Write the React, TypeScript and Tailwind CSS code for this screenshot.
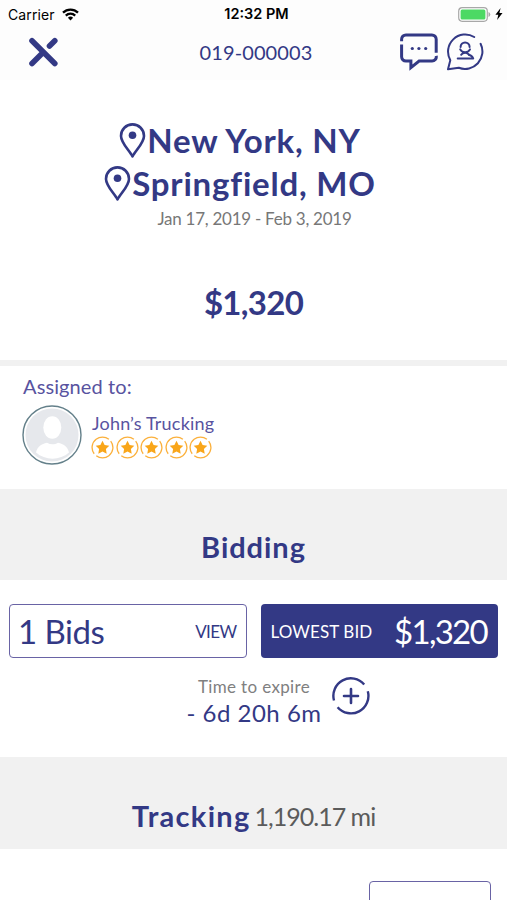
interface RouteStopProps {
  city: string;
  spacing: string;
}

function StatusBar() {
  return (
    <div className="grid h-7 grid-cols-3 items-center pl-2 pr-1 font-['Inter',sans-serif] text-[14px] text-black">
      <div className="flex items-center gap-[7px]">
        <span className="tracking-[0.1px]">Carrier</span>
        <svg width="17" height="13" viewBox="0 0 17 13" fill="none" stroke="currentColor" strokeWidth="2.3">
          <path d="M1 4.6a10.8 10.8 0 0 1 15 0" />
          <path d="M3.8 7.6a6.8 6.8 0 0 1 9.4 0" />
          <path d="M5.9 9.8a3.8 3.8 0 0 1 5.2 0L8.5 12.5z" fill="currentColor" stroke="none" />
        </svg>
      </div>
      <span className="pl-[2px] text-center text-[14.5px] font-semibold whitespace-nowrap">12:32 PM</span>
      <div className="flex items-center justify-end gap-[4px]">
        <svg width="33" height="15" viewBox="0 0 33 15">
          <rect x="0.7" y="0.7" width="28.6" height="13.6" rx="3.5" fill="#fff" stroke="#a8a8a8" strokeWidth="1.2" />
          <rect x="2.6" y="2.6" width="24.8" height="9.8" rx="1.5" fill="#4cd964" />
          <path d="M30.5 5v5q1.8-.8 1.8-2.5T30.5 5z" fill="#a8a8a8" />
        </svg>
        <svg width="8" height="12" viewBox="0 0 8 12">
          <path d="M5.6 0 .4 6.8h2.9L2.1 12l5.4-7H4.4z" fill="#000" />
        </svg>
      </div>
    </div>
  );
}

function CloseIcon() {
  return (
    <svg width="30" height="30" viewBox="0 0 30 30" fill="none" stroke="#333985" strokeWidth="5.6" strokeLinecap="round">
      <path d="M4 3.8 26.800 26.600M4 26.600 14 16.600M21.500 9.100 26.800 3.800" />
    </svg>
  );
}

function ChatIcon() {
  return (
    <svg width="38" height="38" viewBox="0 0 38 38" fill="none" stroke="#333985" strokeWidth="3">
      <path d="M1.6 8.2V6.2a4.3 4.3 0 0 1 4.3-4.3h26a4.3 4.3 0 0 1 4.3 4.3v13.6" />
      <path d="M1.6 11.4v12.4a4.3 4.3 0 0 0 4.3 4.3h5v6.5l8.2-6.5h12.8a4.3 4.3 0 0 0 4.3-5.2" />
      <g fill="#333985" stroke="none">
        <circle cx="12.3" cy="15.5" r="1.6" />
        <circle cx="18.9" cy="15.5" r="1.6" />
        <circle cx="25.7" cy="15.5" r="1.6" />
      </g>
    </svg>
  );
}

function ContactIcon() {
  return (
    <svg width="38" height="38" viewBox="0 0 38 38" fill="none" stroke="#333985" strokeWidth="2" strokeLinejoin="round" strokeLinecap="round">
      <path d="M28.2 4A17.2 17.2 0 0 0 4.3 27.2L2 36.3l10.8-1.5A17.4 17.4 0 0 0 34.6 10.8" />
      <path d="M14.6 13.900a4.500 4.500 0 0 1 9 0" />
      <path d="M14.2 16.400c2 3.800 7.800 3.800 9.800 0M15.200 21.800c1.400-2.800 6.400-2.800 7.800 0" />
      <path d="M27.200 25.500H11.700M27.200 25.500c-.7-2.200-2-3-4.200-3.700" />
    </svg>
  );
}

function RouteStop({ city, spacing }: RouteStopProps) {
  return (
    <div className="flex h-[43px] items-center">
      <svg className="mr-[1px] shrink-0" width="27" height="36" viewBox="0 0 27 36" fill="none">
        <path d="M13.5 33.500C10.500 27.500 2 20 2 12.900a11.500 11.500 0 0 1 23 0c0 7.100-8.500 14.600-11.500 20.600z" stroke="#333985" strokeWidth="2.6" strokeLinejoin="round" />
        <circle cx="13.5" cy="12.2" r="3.8" fill="#333985" />
      </svg>
      <span className={`text-[33px] font-bold whitespace-nowrap ${spacing}`}>{city}</span>
    </div>
  );
}

function RatingStar() {
  return (
    <svg width="23" height="23" viewBox="0 0 23 23" fill="none">
      <circle cx="11.5" cy="11.5" r="10.4" stroke="#fbb03b" strokeWidth="1.3" strokeDasharray="29.67 3" transform="rotate(-38 11.5 11.5)" />
      <path d="m11.5 4.8 2.1 4.3 4.7.7-3.4 3.3.8 4.7-4.2-2.2-4.2 2.2.8-4.7-3.4-3.3 4.7-.7z" fill="#f9a61a" />
    </svg>
  );
}

function Avatar() {
  return (
    <svg width="60" height="60" viewBox="0 0 60 60">
      <circle cx="30" cy="30" r="29" fill="#fff" stroke="#64808a" strokeWidth="1.4" />
      <circle cx="30" cy="30" r="26.5" fill="#e6e8ec" />
      <ellipse cx="30.3" cy="22.5" rx="9" ry="11.2" fill="#fff" />
      <path d="M14 47.5c1.5-6 5.5-8.5 11-9.7 3.5 2 7.5 2 11 0 5.5 1.2 9.5 3.7 11 9.7-9 8.2-24 8.2-33 0z" fill="#fff" />
    </svg>
  );
}

export default function App() {
  return (
    <div className="flex h-[900px] w-[507px] flex-col overflow-hidden bg-white font-['Lato',sans-serif] text-[#333985]">
      <header className="h-20 shrink-0 bg-[#fdfdfd]">
        <StatusBar />
        <div className="grid grid-cols-3 items-center pt-[5px] pl-7 pr-[23px]">
          <CloseIcon />
          <span className="text-center text-[20px] tracking-[0.1px] whitespace-nowrap">019-000003</span>
          <div className="flex justify-end gap-[8px]">
            <ChatIcon />
            <ContactIcon />
          </div>
        </div>
      </header>

      <section className="flex h-[280px] shrink-0 flex-col items-center pt-[39px] pr-[27px]">
        <RouteStop city="New York, NY" spacing="tracking-[0.8px]" />
        <RouteStop city="Springfield, MO" spacing="tracking-[0.8px]" />
        <p className="pt-px pl-[29px] text-[17px] leading-[26px] tracking-[-0.26px] text-[#777]">Jan 17, 2019 - Feb 3, 2019</p>
        <p className="mt-[49px] pl-[27px] text-[33px] leading-[42px] font-bold tracking-[-0.7px]">$1,320</p>
      </section>

      <section className="h-[129px] shrink-0 border-t-[6px] border-[#f1f1f1] pl-[22px] pt-[7px]">
        <p className="pl-px text-[20px] leading-[27px] tracking-[0.1px] text-[#5853a0]">Assigned to:</p>
        <div className="flex items-center gap-[9px] pt-[5px]">
          <Avatar />
          <div>
            <p className="pl-px text-[18px] leading-[25px] tracking-[0.2px] text-[#5853a0]">John’s Trucking</p>
            <div className="flex gap-[1.5px]">
              {[1, 2, 3, 4, 5].map((n) => (
                <RatingStar key={n} />
              ))}
            </div>
          </div>
        </div>
      </section>

      <h2 className="h-[91px] shrink-0 bg-[#f1f1f1] pt-[38px] text-center text-[29px] leading-10 font-bold tracking-[0.95px]">
        Bidding
      </h2>

      <section className="h-[177px] shrink-0 px-[9px] pt-[24px]">
        <div className="grid grid-cols-2 gap-[14px]">
          <div className="flex h-[54px] items-center justify-between rounded-[4px] border-[1.5px] border-[#6963a5] pr-[9px] pl-[8px]">
            <span className="pt-px text-[33px] tracking-[-0.5px] whitespace-nowrap">1 Bids</span>
            <span className="pt-[2px] text-[17px] tracking-[-0.6px]">VIEW</span>
          </div>
          <div className="flex h-[54px] items-center justify-between rounded-[4px] bg-[#333985] pr-[11px] pl-[10px] text-white">
            <span className="pt-[2px] text-[17px] tracking-[0.1px] whitespace-nowrap">LOWEST BID</span>
            <span className="pt-px text-[33px] tracking-[-1.7px]">$1,320</span>
          </div>
        </div>
        <div className="flex items-start justify-center gap-[10px] pt-[18px] pl-[49px]">
          <div className="text-center whitespace-nowrap">
            <p className="text-[17px] leading-[22px] tracking-[0.35px] text-[#808080]">Time to expire</p>
            <p className="text-[24px] leading-[29px] tracking-[0.5px]">- 6d 20h 6m</p>
          </div>
          <svg className="mt-px" width="38" height="38" viewBox="0 0 38 38" fill="none" stroke="#333985" strokeWidth="2.4">
            <path d="M2 23.500A17.500 17.500 0 0 1 32.200 7.500M35.800 14.200A17.500 17.500 0 0 1 5.600 30.200" />
            <path d="M19 12v14M12 19h14" strokeWidth="2.6" strokeLinecap="round" />
          </svg>
        </div>
      </section>

      <section className="flex h-[92px] shrink-0 items-center justify-center gap-[4px] bg-[#f1f1f1] pt-[26px]">
        <h2 className="text-[29px] font-bold tracking-[1.3px]">Tracking</h2>
        <span className="pt-px text-[25px] tracking-[-1px] text-[#5b5b5b]">1,190.17 mi</span>
      </section>

      <section className="flex justify-end pt-[32px] pr-[16px]">
        <div className="h-[54px] w-[122px] rounded-[4px] border-[1.5px] border-[#6963a5]" />
      </section>
    </div>
  );
}
